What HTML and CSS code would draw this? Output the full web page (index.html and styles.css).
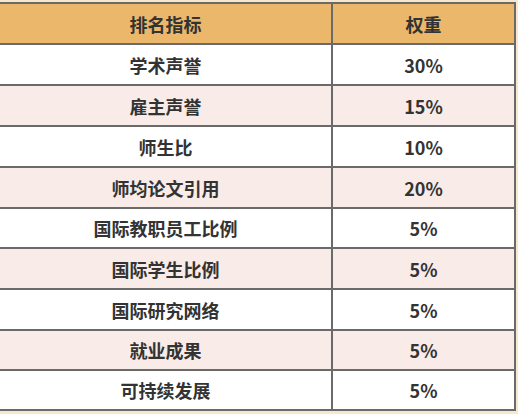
FILE: index.html
```html
<!DOCTYPE html>
<html lang="zh">
<head>
<meta charset="utf-8">
<link rel="stylesheet" href="styles.css">
</head>
<body>
<div class="table">
  <div class="row head"><div class="cell">排名指标</div><div class="cell">权重</div></div>
  <div class="row"><div class="cell">学术声誉</div><div class="cell">30%</div></div>
  <div class="row pink"><div class="cell">雇主声誉</div><div class="cell">15%</div></div>
  <div class="row"><div class="cell">师生比</div><div class="cell">10%</div></div>
  <div class="row pink"><div class="cell">师均论文引用</div><div class="cell">20%</div></div>
  <div class="row short"><div class="cell">国际教职员工比例</div><div class="cell">5%</div></div>
  <div class="row pink"><div class="cell">国际学生比例</div><div class="cell">5%</div></div>
  <div class="row"><div class="cell">国际研究网络</div><div class="cell">5%</div></div>
  <div class="row pink short"><div class="cell">就业成果</div><div class="cell">5%</div></div>
  <div class="row short"><div class="cell">可持续发展</div><div class="cell">5%</div></div>
</div>
</body>
</html>
```
FILE: styles.css
```css
html, body {
  margin: 0;
  padding: 0;
  background: #f7e8cb;
}
body {
  width: 518px;
  height: 414px;
  overflow: hidden;
  padding-top: 2px;
  box-sizing: border-box;
  font-family: "Noto Sans CJK SC", "Noto Sans", sans-serif;
  font-weight: 700;
  font-size: 18px;
  color: #333;
}
.table {
  width: 516px;
  box-sizing: border-box;
  border-top: 2px solid #6a6a6a;
  border-right: 2px solid #6a6a6a;
  background: #fff;
}
.row {
  display: grid;
  grid-template-columns: 333px 1fr;
  height: 41px;
  box-sizing: border-box;
  border-bottom: 2px solid #6a6a6a;
}
.row.short { height: 40px; }
.row.head {
  height: 41px;
  background: #ebb86b;
}
.row.pink { background: #f8ebe8; }
.cell {
  display: flex;
  align-items: center;
  justify-content: center;
  line-height: 1;
}
.cell:first-child {
  border-right: 2px solid #6a6a6a;
}
```
